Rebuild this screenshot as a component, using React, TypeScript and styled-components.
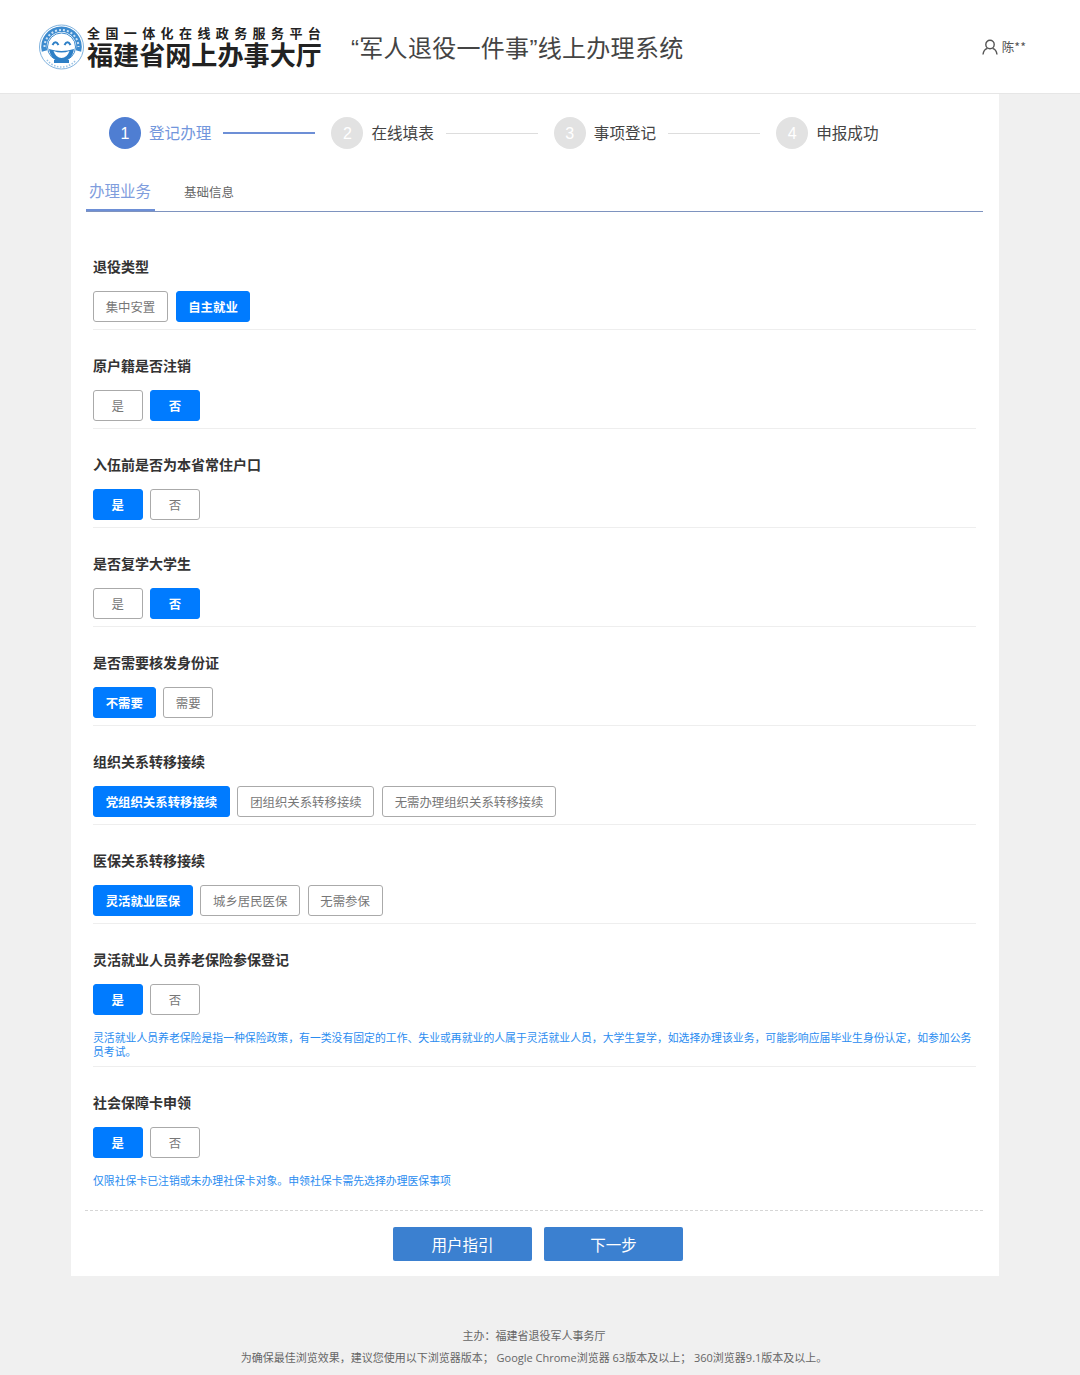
import * as React from 'react';
import styled, { createGlobalStyle } from 'styled-components';

const Global = createGlobalStyle`
    html, body { margin: 0; padding: 0; background: #f0f0f0; }
    body { font-family: "Noto Sans CJK SC", "Liberation Sans", sans-serif; color: #333; }
`;

const Page = styled.div`
    width: 1080px;
    height: 1375px;
    overflow: hidden;
    display: flex;
    flex-direction: column;
`;

const Header = styled.header`
    height: 93px;
    flex: none;
    background: #fff;
    border-bottom: 1px solid #e6e6e6;
    display: flex;
    align-items: center;
    padding-left: 39px;
    padding-right: 54px;
`;

const LogoTexts = styled.div`
    display: flex;
    flex-direction: column;
    gap: 2px;
    padding-top: 1px;
    margin-left: 3px;
    width: 236px;
    color: #222;
`;

const LogoSmall = styled.div`
    font-size: 13px;
    line-height: 12px;
    font-weight: 700;
    letter-spacing: 5.4px;
    white-space: nowrap;
`;

const LogoBig = styled.div`
    font-size: 26.1px;
    line-height: 26px;
    font-weight: 700;
    white-space: nowrap;
`;

const SystemTitle = styled.div`
    margin-left: 28px;
    font-family: "Liberation Sans", "Noto Sans CJK SC", sans-serif;
    font-size: 24px;
    letter-spacing: 0.3px;
    color: #444;
    white-space: nowrap;
    flex: 1;
`;

const UserBox = styled.div`
    display: flex;
    align-items: center;
    gap: 4px;
    font-size: 12.5px;
    color: #555;
`;

const Card = styled.main`
    width: 928px;
    height: 1182px;
    flex: none;
    margin-left: 71px;
    background: #fff;
    display: flex;
    flex-direction: column;
`;

const Stepper = styled.div`
    display: flex;
    align-items: center;
    padding: 23px 0 0 38px;
`;

const StepCircle = styled.div<{ $active?: boolean }>`
    width: 32px;
    height: 32px;
    box-sizing: border-box;
    padding-top: 1px;
    border-radius: 50%;
    flex: none;
    display: flex;
    align-items: center;
    justify-content: center;
    font-size: 16px;
    font-family: "Liberation Sans", sans-serif;
    color: #fff;
    background: ${p => (p.$active ? '#4f7ed2' : '#e2e2e2')};
`;

const StepLabel = styled.div<{ $active?: boolean }>`
    margin-left: 8px;
    margin-bottom: 2px;
    font-size: 15.6px;
    line-height: 30px;
    white-space: nowrap;
    color: ${p => (p.$active ? '#7296dc' : '#444')};
`;

const StepLine = styled.div<{ $active?: boolean }>`
    width: 92px;
    margin: 0 16px 0 12px;
    height: ${p => (p.$active ? '2px' : '1px')};
    background: ${p => (p.$active ? '#6d8fd6' : '#ddd')};
`;

const TabBar = styled.div`
    margin: 16px 16px 0 15px;
    height: 46px;
    display: flex;
    align-items: stretch;
    border-bottom: 1px solid #7e93bf;
`;

const Tab = styled.div<{ $active?: boolean }>`
    display: flex;
    align-items: center;
    height: 46px;
    box-sizing: border-box;
    padding-left: 3px;
    padding-top: 6px;
    width: ${p => (p.$active ? '69px' : 'auto')};
    margin-left: ${p => (p.$active ? '0' : '26px')};
    font-size: ${p => (p.$active ? '15.5px' : '12.5px')};
    color: ${p => (p.$active ? '#7f9ddd' : '#666')};
    border-bottom: ${p => (p.$active ? '2px solid #6d8fd6' : '0')};
`;

const Form = styled.div`
    margin: 19px 23px 0 22px;
    display: flex;
    flex-direction: column;
`;

const Section = styled.section<{ $plain?: boolean }>`
    padding-top: 25px;
    padding-bottom: 7px;
    border-bottom: ${p => (p.$plain ? '0' : '1px solid #eee')};
`;

const SectionTitle = styled.div`
    font-size: 14px;
    line-height: 20px;
    font-weight: 700;
    color: #333;
    margin-bottom: 15px;
`;

const Options = styled.div`
    display: flex;
    gap: 7.6px;
`;

const Option = styled.div<{ $on?: boolean }>`
    height: 31px;
    box-sizing: border-box;
    padding: 0 11.7px;
    min-width: 49.6px;
    display: flex;
    align-items: center;
    justify-content: center;
    border-radius: 3px;
    font-size: 12.4px;
    font-weight: ${p => (p.$on ? 700 : 400)};
    white-space: nowrap;
    color: ${p => (p.$on ? '#fff' : '#777')};
    background: ${p => (p.$on ? '#007bff' : '#fff')};
    border: 1px solid ${p => (p.$on ? '#007bff' : '#aaa')};
`;

const Hint = styled.div`
    font-size: 10.85px;
    line-height: 14px;
    color: #2a8cf0;
    margin-top: 15px;
    margin-bottom: 1px;
`;

const Actions = styled.div`
    margin: 15px 16px 0 14px;
    border-top: 1px dashed #d6d6d6;
    padding: 16px 0 0 8px;
    display: flex;
    justify-content: center;
    gap: 12px;
`;

const ActionButton = styled.div`
    width: 139px;
    height: 34px;
    border-radius: 2px;
    background: #3b80d0;
    color: #fff;
    font-size: 15.5px;
    display: flex;
    align-items: center;
    justify-content: center;
`;

const Footer = styled.footer`
    margin-top: 49px;
    padding-right: 12px;
    display: flex;
    flex-direction: column;
    align-items: center;
    font-family: "Open Sans", "Noto Sans CJK SC", sans-serif;
    font-size: 11px;
    line-height: 22px;
    color: #666;
`;

type Sec = { title: string, options: string[], on: number, hint?: string };

const sections : Sec[] = [
    { title: '退役类型', options: ['集中安置', '自主就业'], on: 1 },
    { title: '原户籍是否注销', options: ['是', '否'], on: 1 },
    { title: '入伍前是否为本省常住户口', options: ['是', '否'], on: 0 },
    { title: '是否复学大学生', options: ['是', '否'], on: 1 },
    { title: '是否需要核发身份证', options: ['不需要', '需要'], on: 0 },
    { title: '组织关系转移接续', options: ['党组织关系转移接续', '团组织关系转移接续', '无需办理组织关系转移接续'], on: 0 },
    { title: '医保关系转移接续', options: ['灵活就业医保', '城乡居民医保', '无需参保'], on: 0 },
    {
        title: '灵活就业人员养老保险参保登记',
        options: ['是', '否'],
        on: 0,
        hint: '灵活就业人员养老保险是指一种保险政策，有一类没有固定的工作、失业或再就业的人属于灵活就业人员，大学生复学，如选择办理该业务，可能影响应届毕业生身份认定，如参加公务员考试。',
    },
    {
        title: '社会保障卡申领',
        options: ['是', '否'],
        on: 0,
        hint: '仅限社保卡已注销或未办理社保卡对象。申领社保卡需先选择办理医保事项',
    },
];

const steps = ['登记办理', '在线填表', '事项登记', '申报成功'];

function Logo()
{
    return (
        <svg width="45" height="46" viewBox="0 0 45 46">
            <circle cx="22.5" cy="23" r="22" fill="#fff" stroke="#7fb2de" strokeWidth="1" />
            <path d="M5.5 27 A17.5 17.5 0 1 1 39.5 27" fill="none" stroke="#3d8bcf" strokeWidth="5.5" />
            <path d="M5.5 23 A17 17 0 0 1 39.5 23" fill="none" stroke="#cfe3f5" strokeWidth="2" strokeDasharray="2 2" />
            <circle cx="22.5" cy="23" r="14" fill="#fff" stroke="#3d8bcf" strokeWidth="1" />
            <path d="M10 25 Q22.5 29 35 25 Q33 37 22.5 37 Q12 37 10 25 Z" fill="#2d7fc6" />
            <path d="M14.5 27 Q22.5 30 30.5 27 Q28 34 22.5 34 Q17 34 14.5 27 Z" fill="#fff" />
            <path d="M13.5 21 Q16.5 15.5 19.5 21" fill="none" stroke="#2d7fc6" strokeWidth="2" />
            <path d="M25.5 21 Q28.5 15.5 31.5 21" fill="none" stroke="#2d7fc6" strokeWidth="2" />
            <path d="M15 37.5 H30" stroke="#2d7fc6" strokeWidth="3" />
            <path d="M8 36 A18.5 18.5 0 0 0 37 36" fill="none" stroke="#9cc4e6" strokeWidth="1.6" strokeDasharray="1.5 1.5" />
        </svg>
    );
}

function UserIcon()
{
    return (
        <svg width="16" height="16" viewBox="0 0 16 16" fill="none" stroke="#555" strokeWidth="1.4">
            <circle cx="8" cy="5.5" r="4.2" />
            <path d="M1 15.5 C1.5 11.5 4 9.8 5.5 9.4 M15 15.5 C14.5 11.5 12 9.8 10.5 9.4" />
        </svg>
    );
}

export default function App()
{
    return (
        <Page>
            <Global />
            <Header>
                <Logo />
                <LogoTexts>
                    <LogoSmall>全国一体化在线政务服务平台</LogoSmall>
                    <LogoBig>福建省网上办事大厅</LogoBig>
                </LogoTexts>
                <SystemTitle>“军人退役一件事”线上办理系统</SystemTitle>
                <UserBox>
                    <UserIcon />
                    陈**
                </UserBox>
            </Header>
            <Card>
                <Stepper>
                    {steps.map((s, i) => (
                        <React.Fragment key={s}>
                            <StepCircle $active={i === 0}>{i + 1}</StepCircle>
                            <StepLabel $active={i === 0}>{s}</StepLabel>
                            {i < 3 ? <StepLine $active={i === 0} /> : null}
                        </React.Fragment>
                    ))}
                </Stepper>
                <TabBar>
                    <Tab $active>办理业务</Tab>
                    <Tab>基础信息</Tab>
                </TabBar>
                <Form>
                    {sections.map((s, i) => (
                        <Section key={s.title} $plain={i === sections.length - 1}>
                            <SectionTitle>{s.title}</SectionTitle>
                            <Options>
                                {s.options.map((o, j) => (
                                    <Option key={o} $on={j === s.on}>{o}</Option>
                                ))}
                            </Options>
                            {s.hint ? <Hint>{s.hint}</Hint> : null}
                        </Section>
                    ))}
                </Form>
                <Actions>
                    <ActionButton>用户指引</ActionButton>
                    <ActionButton>下一步</ActionButton>
                </Actions>
            </Card>
            <Footer>
                <div>主办：福建省退役军人事务厅</div>
                <div>为确保最佳浏览效果，建议您使用以下浏览器版本； Google Chrome浏览器 63版本及以上； 360浏览器9.1版本及以上。</div>
            </Footer>
        </Page>
    );
}
